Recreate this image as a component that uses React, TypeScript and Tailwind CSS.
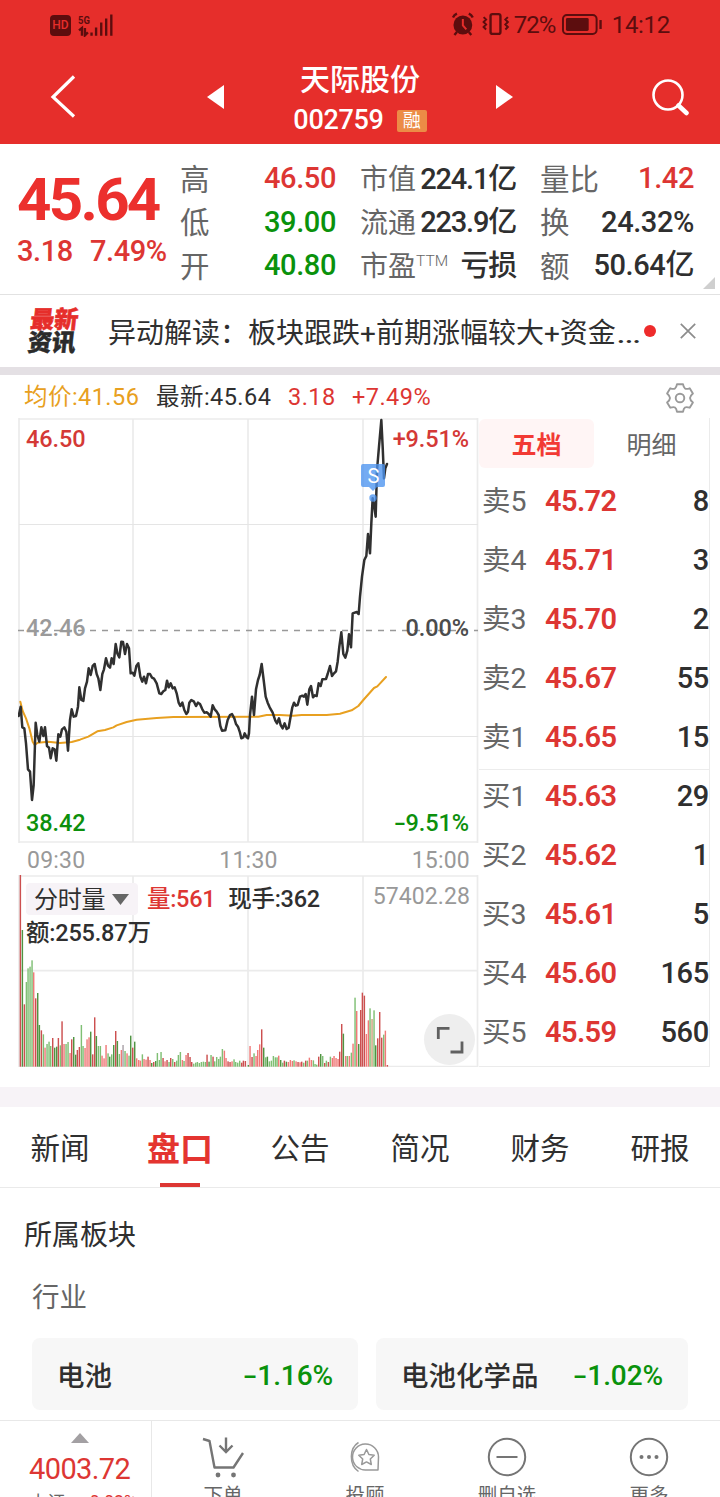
import React from "react";

const PRICE =
  "56,348 62,320 67,382 73,385 78,430 84,508 90,515 96,600 101,555 107,368 112,405 118,425 124,382 130,408 135,382 141,438 147,443 152,475 158,445 164,448 169,482 175,403 181,410 186,388 193,382 199,395 204,452 210,360 215,328 221,350 228,348 234,320 238,262 244,300 250,303 255,265 261,245 266,205 272,225 278,198 284,192 290,222 295,235 301,270 307,222 312,208 318,175 324,197 330,203 335,175 341,192 347,132 352,160 358,172 364,125 369,126 375,162 381,132 387,145 392,220 398,218 403,227 409,198 415,190 421,230 427,245 432,230 438,250 444,222 450,222 456,233 462,236 470,250 478,280 484,282 490,274 496,270 501,242 506,262 512,250 518,265 524,262 530,280 536,308 541,318 547,308 553,330 559,342 564,335 568,308 574,300 582,305 588,318 594,308 600,312 607,328 613,338 620,337 626,342 632,350 638,316 644,328 650,335 656,345 661,378 666,392 676,391 683,360 690,345 696,342 703,355 708,372 714,380 720,398 724,415 730,412 734,400 740,412 744,415 747,400 750,345 756,290 762,345 768,268 774,240 779,225 785,192 791,240 797,290 803,308 809,322 818,338 826,362 831,370 837,355 842,375 848,385 854,370 860,387 866,383 871,355 877,322 882,308 887,317 893,315 900,290 907,287 912,290 917,282 922,314 928,268 933,258 939,292 944,286 950,288 956,250 962,258 967,238 978,237 983,222 990,198 996,228 1002,220 1008,214 1013,185 1018,140 1024,97 1030,162 1036,173 1042,152 1047,103 1053,142 1058,40 1070,36 1076,42 1080,-10 1086,-70 1093,-120 1099,-132 1104,-198 1110,-140 1114,-230 1118,-305 1123,-280 1127,-250 1131,-390 1137,-460 1144,-540 1148,-460 1152,-365 1156,-395 1161,-408";

const AVERAGE =
  "61,305 68,333 78,355 88,385 98,425 104,435 113,428 145,425 180,429 215,426 240,419 265,410 292,394 315,390 340,382 350,376 380,366 410,359 470,354 520,351 775,350 800,345 840,345 880,347 905,345 980,345 1020,341 1055,331 1075,318 1090,300 1122,264 1132,259 1158,231";

/* x : top : tone. Three units make one pixel, the base line lies at 620. */
const VOLUME =
  "61:45:R 67:210:G 73:433:R 79:366:g 84:325:g 90:320:g 96:301:g 101:337:r 107:415:R 113:399:G 118:495:G 124:511:R 130:523:g 135:563:r 141:552:g 147:545:g 152:558:g 158:534:R 164:563:G 170:560:G 175:534:R 181:556:g 186:484:R 192:552:r 198:552:g 204:546:g 210:579:r 215:538:R 221:531:G 227:584:G 232:570:R 238:561:R 244:495:g 249:558:g 255:564:r 261:538:r 267:532:r 272:515:G 278:583:R 284:472:R 289:528:G 295:558:g 301:558:g 306:587:r 312:595:r 318:555:r 324:580:g 329:590:G 335:583:g 341:555:G 347:513:R 352:543:G 358:582:g 364:570:r 369:555:n 375:573:g 381:580:r 387:587:g 392:527:G 398:563:R 404:545:G 410:595:r 416:600:r 421:602:r 427:583:g 432:597:r 438:599:r 444:590:R 450:600:r 455:609:G 461:606:R 467:603:G 472:579:g 478:600:g 483:576:g 489:594:R 495:604:r 501:600:R 507:606:g 512:594:R 518:597:g 524:606:R 530:602:g 535:585:g 541:576:g 547:600:r 552:603:g 558:585:r 564:579:R 570:591:R 575:606:R 581:611:g 587:608:g 592:606:g 598:609:g 604:606:g 610:605:g 616:606:g 621:584:R 627:605:G 633:585:g 639:590:R 644:604:g 650:591:g 656:597:g 661:590:g 667:567:g 673:572:r 678:594:r 684:604:R 690:606:R 696:604:r 702:598:g 707:606:g 713:608:g 719:602:g 725:608:R 730:602:R 736:603:R 745:615:G 750:558:r 756:591:R 762:580:g 768:588:r 773:570:r 779:553:r 785:508:R 791:563:G 797:592:g 802:590:G 808:604:g 814:602:g 820:588:g 826:592:g 831:592:g 836:587:r 842:600:G 848:608:g 853:602:R 859:605:G 865:606:r 871:600:r 877:603:r 882:601:g 888:604:r 894:606:R 900:607:r 905:605:R 911:608:g 917:602:R 922:602:g 928:593:r 934:600:r 940:601:g 945:612:g 950:614:g 956:590:R 962:582:G 968:588:g 974:609:R 979:602:g 985:606:R 991:590:g 997:594:r 1002:588:r 1008:594:r 1014:597:r 1019:575:R 1025:492:R 1030:521:G 1037:588:r 1042:588:g 1048:588:r 1054:578:g 1059:551:r 1065:413:g 1070:453:r 1076:552:G 1082:450:R 1087:398:R 1093:407:R 1099:522:r 1105:481:r 1110:445:g 1116:477:t 1122:451:g 1127:556:G 1133:535:R 1139:456:R 1145:533:R 1151:524:g 1156:512:r 1162:615:R";

const TONES: Record<string, string> = {
  R: "#cc4f4f",
  r: "#f07a78",
  G: "#4f9442",
  g: "#7fbf74",
  n: "#aaa2a8",
  t: "#cda27c",
};

const bars = VOLUME.split(" ").map((item) => {
  const [x, top, tone] = item.split(":");
  return { x: Number(x), top: Number(top), fill: TONES[tone] };
});

const book = [
  ["卖5", "45.72", "8"],
  ["卖4", "45.71", "3"],
  ["卖3", "45.70", "2"],
  ["卖2", "45.67", "55"],
  ["卖1", "45.65", "15"],
  ["买1", "45.63", "29"],
  ["买2", "45.62", "1"],
  ["买3", "45.61", "5"],
  ["买4", "45.60", "165"],
  ["买5", "45.59", "560"],
];

/* A fall in per cent, with a broad minus sign. */
function Fall({ children }: { children: string }) {
  return (
    <span>
      <span className="mr-[0.170em] inline-block origin-left scale-x-150">-</span>
      {children}
    </span>
  );
}

function StatusBar() {
  return (
    <div className="flex h-[49px] items-center pl-[50px] pr-[50px] text-[#5c0d0e]">
      <div className="mt-px flex h-[21px] w-[21px] items-center justify-center rounded-[4px] bg-[#5c0d0e] text-[12px] font-medium leading-none text-[#e62e2b]">
        HD
      </div>
      <svg className="ml-[7px] h-[24px] w-[37px]" viewBox="78 12 37 24">
        <text x="78" y="22.5" fontSize="11.5" fontWeight="700" textLength="12" lengthAdjust="spacingAndGlyphs" fill="#5c0d0e">
          5G
        </text>
        <path
          d="M79 29.5l3-2.5v8M85 27v7.5l3-3M91.7 31.5v3.3M96.3 26.5v8.3M101.5 21.500v13.300M106.500 17.500v17.300M111.700 13.500v21.300"
          stroke="#5c0d0e"
          strokeWidth="2.4"
          fill="none"
        />
      </svg>
      <svg className="ml-[336px] h-[26px] w-[60px]" viewBox="449 12 60 26" fill="none" stroke="#5c0d0e">
        <circle cx="462" cy="25" r="9.500" fill="#5c0d0e" stroke="none" />
        <path d="M452 17.500a8 8 0 0 1 4-4M472 17.500a8 8 0 0 0-4-4M456 32l-2.500 3M468 32l2.500 3" strokeWidth="2.400" />
        <path d="M462 19v6.500l3.500 4" stroke="#e62e2b" strokeWidth="2" />
        <rect x="490" y="14" width="10" height="20" rx="2" strokeWidth="2.400" />
        <path d="M483 17l2.500 2.500-2.500 2.500 2.500 2.500-2.500 2.500 2.500 2.500M507.500 17l-2.500 2.500 2.500 2.500-2.500 2.500 2.500 2.500-2.500 2.500" strokeWidth="2" />
      </svg>
      <span className="ml-[4px] w-[44px] whitespace-nowrap text-[24px] leading-none tracking-[-0.900px]">72%</span>
      <svg className="ml-[4px] h-[22px] w-[41px]" viewBox="562 14 41 22" fill="none" stroke="#5c0d0e">
        <rect x="564" y="15" width="34" height="19" rx="4" strokeWidth="2" />
        <rect x="567" y="18" width="23" height="13" rx="1.500" fill="#5c0d0e" stroke="none" />
        <path d="M602 20v9" strokeWidth="2.400" />
      </svg>
      <span className="ml-[10px] whitespace-nowrap text-[24px] leading-none tracking-[-0.300px]">14:12</span>
    </div>
  );
}

function Header() {
  return (
    <header className="h-[144px] shrink-0 bg-[#e62e2b]">
      <StatusBar />
      <div className="flex h-[95px] items-center text-white">
        <svg className="ml-[50px] h-[44px] w-[28px]" viewBox="50 73 28 44" fill="none" stroke="white" strokeWidth="3.200">
          <path d="M74 74.500L53 95l21 19.500" />
        </svg>
        <svg className="ml-[129px] h-[24px] w-[17px]" viewBox="0 0 17 24" fill="white">
          <path d="M17 0v24L0 12z" />
        </svg>
        <div className="flex w-[272px] flex-col items-center">
          <div className="mt-[7px] text-[30px] font-medium leading-[36px]">天际股份</div>
          <div className="mt-[5px] flex h-[36px] items-center">
            <span className="text-[27px] font-medium leading-none tracking-[-0.300px]">002759</span>
            <span className="ml-[13px] flex h-[22px] w-[30px] items-center justify-center rounded-[2px] bg-[#ec8c46] pt-px text-[18px] leading-none">融</span>
          </div>
        </div>
        <svg className="h-[24px] w-[17px]" viewBox="0 0 17 24" fill="white">
          <path d="M0 0v24l17-12z" />
        </svg>
        <svg className="ml-[138px] h-[38px] w-[38px]" viewBox="651 77 38 38" fill="none" stroke="white">
          <circle cx="668" cy="94" r="14.500" strokeWidth="2.600" />
          <path d="M678.500 104.500l8 7.500" strokeWidth="4.500" strokeLinecap="round" />
        </svg>
      </div>
    </header>
  );
}

function Pair({ label, value, tone, small }: { label: React.ReactNode; value: string; tone: string; small?: boolean }) {
  return (
    <div className="flex h-[43.500px] items-center justify-between whitespace-nowrap leading-none">
      <span className={small ? "flex pt-[3px] text-[28px] text-[#666]" : "flex pt-[3px] text-[29.500px] text-[#666]"}>{label}</span>
      <span className={`text-[29px] font-medium ${small ? "pt-px tracking-[-1.200px]" : "tracking-[-0.400px]"} ${tone}`}>{value}</span>
    </div>
  );
}

function Quote() {
  const red = "text-[#dd3633]";
  const green = "text-[#0a920c]";
  const dark = "text-[#2f2f2f]";
  return (
    <section className="relative flex h-[150px] shrink-0 pt-[13px] font-normal">
      <div className="w-[180px] pl-[17px]">
        <div className="mt-[13px] text-[60px] font-bold leading-[60px] tracking-[-2.700px] text-[#ec302d]">45.64</div>
        <div className="mt-[6px] flex gap-[17px] whitespace-nowrap text-[29px] font-medium leading-[30px] tracking-[-0.400px] text-[#dd3633]">
          <span>3.18</span>
          <span>7.49%</span>
        </div>
      </div>
      <div className="w-[156px]">
        <Pair label="高" value="46.50" tone={red} />
        <Pair label="低" value="39.00" tone={green} />
        <Pair label="开" value="40.80" tone={green} />
      </div>
      <div className="ml-[24px] w-[156px]">
        <Pair small label="市值" value="224.1亿" tone={dark} />
        <Pair small label="流通" value="223.9亿" tone={dark} />
        <Pair small label={<>市盈<span className="mt-[1px] text-[15.500px] font-light">TTM</span></>} value="亏损" tone={dark} />
      </div>
      <div className="ml-[24px] w-[154px]">
        <Pair label="量比" value="1.42" tone={red} />
        <Pair label="换" value="24.32%" tone={dark} />
        <Pair label="额" value="50.64亿" tone={dark} />
      </div>
      <svg className="absolute right-[5px] bottom-[5px] h-[12px] w-[12px]" viewBox="0 0 12 12" fill="#cfcfcf">
        <path d="M12 0v12H0z" />
      </svg>
    </section>
  );
}

function News() {
  return (
    <section className="flex h-[73px] shrink-0 items-center border-t border-[#e2e2e2]">
      <div className="ml-[29px] mt-[2px] w-[79px] origin-left -skew-x-6 text-[24px] font-black leading-[23px] [-webkit-text-stroke:0.500px]">
        <div className="text-[#e62e2b]">最新</div>
        <div className="text-[#2b2b2b]">资讯</div>
      </div>
      <div className="mt-[5px] flex h-[36px] w-[536px] whitespace-pre text-[28px] leading-[36px] text-[#2f2f2f]">
        异动解读：板块跟跌+前期涨幅较大+资金<span className="origin-left scale-x-135">…</span>
      </div>
      <div className="h-[12px] w-[12px] rounded-full bg-[#ee2b2b]" />
      <svg className="ml-[24px] h-[16px] w-[16px]" viewBox="0 0 16 16" stroke="#8c8c8c" strokeWidth="1.700">
        <path d="M.800.800l14.400 14.400M15.200.800L.800 15.200" />
      </svg>
    </section>
  );
}

function Gear() {
  return (
    <svg className="h-[30px] w-[32px]" viewBox="0 0 32 30" fill="none" stroke="#9a9a9a" strokeWidth="1.900" strokeLinejoin="round">
      <path d="M13 1.200h6q.6 3.400 2 4.300t4.700-.2l3.200 5.200Q26 13 26 15t2.900 4.500l-3.200 5.200q-3.300-1.100-4.700-.2t-2 4.300h-6q-.6-3.400-2-4.300t-4.700.2l-3.200-5.200Q6 17 6 15t-2.900-4.500l3.200-5.200q3.300 1.100 4.700.2t2-4.300z" />
      <circle cx="16" cy="15" r="4.300" />
    </svg>
  );
}

function PriceChart() {
  return (
    <div className="relative h-[425px] w-[461px]">
      <svg className="block h-[425px] w-[461px]" viewBox="18 418 461 425" fill="none">
        <path d="M19 419h459M19 842h459M19 418v425M133 419v423M248 419v423M363 419v423M477.500 418v425" stroke="#ebebeb" strokeWidth="1.700" />
        <path d="M19 524.500h459M19 736.500h459" stroke="#e5e5e5" />
        <path d="M18 630.500h460" stroke="#999" strokeWidth="1.500" strokeDasharray="6 6" />
        <g transform="translate(0 600) scale(.33333)" strokeLinejoin="round" strokeLinecap="round">
          <polyline points={AVERAGE} stroke="#e8a020" strokeWidth="6" />
          <polyline points={PRICE} stroke="#303030" strokeWidth="7.500" />
        </g>
        <g fill="#4b94f0" fillOpacity=".78">
          <path d="M363 464h20a2 2 0 0 1 2 2v19a2 2 0 0 1-2 2h-6l-4 4-4-4h-6a2 2 0 0 1-2-2v-19a2 2 0 0 1 2-2z" />
          <circle cx="373" cy="498" r="3.700" />
        </g>
        <text x="373.500" y="483" fontSize="20" textAnchor="middle" fill="white">
          S
        </text>
      </svg>
      <div className="absolute inset-0 flex flex-col pl-[8px] pr-[10px] text-[23.500px] font-medium leading-[24px] tracking-[-0.100px]">
        <div className="mt-[9px] flex justify-between text-[#d43936]">
          <span>46.50</span>
          <span>+9.51%</span>
        </div>
        <div className="mt-[165px] flex justify-between text-[#4c4c4c]">
          <span className="text-[#9a9a9a]">42.46</span>
          <span>0.00%</span>
        </div>
        <div className="mt-[171px] flex justify-between text-[#0c900c]">
          <span>38.42</span>
          <Fall>9.51%</Fall>
        </div>
      </div>
    </div>
  );
}

function VolumeChart() {
  return (
    <div className="relative h-[192px] w-[461px]">
      <svg className="block h-[192px] w-[461px]" viewBox="18 875 461 192" fill="none">
        <path d="M19 876h459M19 970.700h459M19 1066.500h459M19 875v192M133 876v190M248 876v190M363 876v190M477.500 875v192" stroke="#ebebeb" strokeWidth="1.700" />
        <g transform="translate(0 860) scale(.33333)">
          {bars.map((bar) => (
            <rect key={bar.x} x={bar.x - 2} y={bar.top} width="4.300" height={620 - bar.top} fill={bar.fill} />
          ))}
        </g>
      </svg>
      <div className="absolute inset-0 pl-[8px] pr-[9px] pt-[8px]">
        <div className="flex h-[32px] items-center whitespace-nowrap text-[23.500px] font-medium leading-none tracking-[-0.300px] text-[#2f2f2f]">
          <div className="flex h-[32px] w-[112px] items-center rounded-[4px] bg-[#f7f3f7] pl-[8px] pt-[2px] text-[24px] font-normal">
            分时量
            <svg className="ml-[7px] mb-px h-[11px] w-[17px]" viewBox="0 0 17 11" fill="#666">
              <path d="M0 0h17L8.500 11z" />
            </svg>
          </div>
          <span className="ml-[9px] pt-[2px] text-[#dd3633]">量:561</span>
          <span className="ml-[13px] pt-[2px]">现手:362</span>
          <span className="mb-[6px] ml-auto text-[23px] font-normal tracking-[0.100px] text-[#999]">57402.28</span>
        </div>
        <div className="mt-[5px] text-[23.500px] font-medium leading-[26px] tracking-[-0.200px] text-[#2f2f2f]">额:255.87万</div>
      </div>
      <div className="absolute bottom-[2px] left-[406px] flex h-[51px] w-[51px] items-center justify-center rounded-full bg-[#eee]">
        <svg className="h-[28px] w-[28px]" viewBox="0 0 28 28" fill="none" stroke="#606060" strokeWidth="2.800">
          <path d="M2.300 13V2.400H13.500M26 15.500V26H14.500" />
        </svg>
      </div>
    </div>
  );
}

function OrderBook() {
  return (
    <div className="h-[649px] w-[231px] border-r border-b border-[#ebebeb]">
      <div className="flex h-[50px] pt-px text-[25px] leading-none text-[#666]">
        <div className="flex h-[49px] w-[115px] items-center justify-center rounded-[6px] bg-[#fff5f5] pt-[3px] font-bold text-[#f23a34]">五档</div>
        <div className="flex h-[49px] w-[115px] items-center justify-center pt-[4px]">明细</div>
      </div>
      <div className="mt-[7px]">
        {book.map(([side, price, size], i) => (
          <div
            key={side}
            className={`flex h-[59px] items-center whitespace-nowrap pb-[6px] leading-none ${i === 5 ? "shadow-[0_-1px_0_#ececec]" : ""}`}
          >
            <span className="w-[66px] pl-[3px] pt-[2px] text-[28.500px] text-[#666]">{side}</span>
            <span className="text-[29px] font-semibold tracking-[-0.600px] text-[#dd3633]">{price}</span>
            <span className="ml-auto text-[29px] font-medium tracking-[-0.300px] text-[#2f2f2f]">{size}</span>
          </div>
        ))}
      </div>
    </div>
  );
}

function ChartSection() {
  return (
    <section className="h-[712px] shrink-0 bg-white">
      <div className="flex h-[43px] items-center whitespace-nowrap pl-[24px] pr-[24px] text-[23.500px] leading-none tracking-[0.450px] text-[#2f2f2f]">
        <span className="w-[132px] pt-[3px] text-[#e8a020]">均价:41.56</span>
        <span className="w-[132px] pt-[3px]">最新:45.64</span>
        <span className="w-[64px] pt-[3px] text-[#dd3633]">3.18</span>
        <span className="pt-[3px] text-[#dd3633]">+7.49%</span>
        <div className="ml-auto mt-[3px]">
          <Gear />
        </div>
      </div>
      <div className="flex pl-[18px]">
        <div className="w-[461px]">
          <PriceChart />
          <div className="flex h-[32px] items-center justify-between pl-[9px] pr-[9px] pt-[2px] text-[23px] leading-none tracking-[0.200px] text-[#999]">
            <span>09:30</span>
            <span>11:30</span>
            <span>15:00</span>
          </div>
          <VolumeChart />
        </div>
        <OrderBook />
      </div>
    </section>
  );
}

function Tabs() {
  return (
    <nav className="flex h-[81px] shrink-0 items-center border-b border-[#eaeaea] text-[29.500px] leading-none text-[#2f2f2f]">
      {["新闻", "盘口", "公告", "简况", "财务", "研报"].map((name) =>
        name === "盘口" ? (
          <div key={name} className="flex h-[80px] w-[120px] flex-col items-center justify-between pt-[26px] text-[33px] font-bold text-[#e43430]">
            {name}
            <div className="h-[4px] w-[40px] bg-[#dd3633]" />
          </div>
        ) : (
          <div key={name} className="w-[120px] pt-[6px] text-center">
            {name}
          </div>
        ),
      )}
    </nav>
  );
}

function Sector({ name, change, width }: { name: string; change: string; width: string }) {
  return (
    <div className={`flex h-[72px] items-center justify-between whitespace-nowrap rounded-[8px] bg-[#f7f7f7] px-[25px] pt-[3px] leading-none ${width}`}>
      <span className="pt-[2px] text-[27.500px] font-medium text-[#2f2f2f]">{name}</span>
      <span className="text-[28px] font-medium tracking-[-0.100px] text-[#0a920c]">
        <Fall>{change}</Fall>
      </span>
    </div>
  );
}

function Action({ label, children }: { label: string; children: React.ReactNode }) {
  return (
    <div className="flex w-[142px] flex-col items-center text-[19.500px] leading-[20px] text-[#666]">
      <svg className="mt-[15px] h-[42px] w-[42px] shrink-0" viewBox="0 0 42 42" fill="none" stroke="#757575" strokeWidth="2">
        {children}
      </svg>
      <span className="mt-[8px] whitespace-nowrap">{label}</span>
    </div>
  );
}

function BottomBar() {
  return (
    <footer className="flex h-[77px] shrink-0 overflow-hidden border-t border-[#e8e8e8] bg-white">
      <div className="w-[152px] shrink-0 border-r border-[#e8e8e8] text-[#dd3633]">
        <svg className="ml-[71px] mt-[12px] h-[10px] w-[18px]" viewBox="0 0 18 10" fill="#a3a0a3">
          <path d="M9 0l9 10H0z" />
        </svg>
        <div className="ml-[29px] mt-[11px] text-[29px] leading-[30px] tracking-[-0.600px]">4003.72</div>
        <div className="ml-[30px] mt-[8px] flex gap-[17px] whitespace-nowrap text-[17.500px] leading-[20px]">
          <span className="text-[#666]">上证</span>
          <Fall>0.02%</Fall>
        </div>
      </div>
      <Action label="下单">
        <path d="M1 3l6.500 2L12.500 31.500h19L41 17" strokeLinejoin="round" strokeWidth="2.400" />
        <path d="M24 1.500v14M17.500 9.500l6.500 6.500 6.500-6.500" strokeWidth="2.400" />
        <circle cx="16" cy="39" r="2.400" fill="#757575" stroke="none" />
        <circle cx="31.500" cy="39" r="2.400" fill="#757575" stroke="none" />
      </Action>
      <Action label="投顾">
        <g stroke="#999" strokeWidth="1.500" strokeLinejoin="round">
          <path d="M34 34H22.500A13 13 0 1 1 34.500 21z" />
          <path d="M14.500 6.500C5.500 12 4.500 28.500 14.500 35.500" />
          <path d="M22.500 13.500l2.400 5 5.300.7-3.900 3.800 1 5.500-4.800-2.600-4.800 2.600 1-5.500-3.900-3.800 5.300-.7z" />
        </g>
      </Action>
      <Action label="删自选">
        <circle cx="21" cy="21" r="18.200" />
        <path d="M10.500 21h21" />
      </Action>
      <Action label="更多">
        <circle cx="21" cy="21" r="18.200" />
        <g fill="#757575" stroke="none">
          <circle cx="13.500" cy="21" r="2" />
          <circle cx="21" cy="21" r="2" />
          <circle cx="28.500" cy="21" r="2" />
        </g>
      </Action>
    </footer>
  );
}

export default function App() {
  return (
    <div className="flex h-[1497px] w-[720px] flex-col overflow-hidden bg-white [font-family:Roboto,'Noto_Sans_CJK_SC',sans-serif]">
      <Header />
      <Quote />
      <News />
      <div className="h-[8px] shrink-0 bg-[#e4e0e4]" />
      <ChartSection />
      <div className="h-[20px] shrink-0 bg-[#f7f3f7]" />
      <Tabs />
      <section className="h-[232px] shrink-0 text-[#2f2f2f]">
        <h2 className="ml-[24px] mt-[32px] text-[28px] leading-[32px]">所属板块</h2>
        <h3 className="ml-[32px] mt-[30px] text-[27.500px] leading-[32px] text-[#666]">行业</h3>
        <div className="ml-[32px] mt-[24px] flex gap-[18px]">
          <Sector name="电池" change="1.16%" width="w-[326px]" />
          <Sector name="电池化学品" change="1.02%" width="w-[312px]" />
        </div>
      </section>
      <BottomBar />
    </div>
  );
}
